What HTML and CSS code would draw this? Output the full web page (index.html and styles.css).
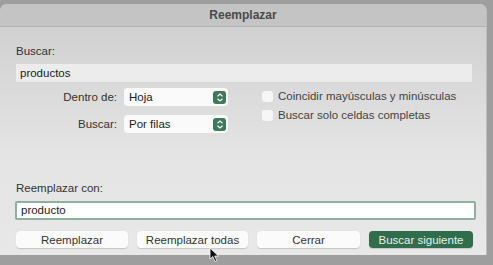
FILE: index.html
```html
<!DOCTYPE html>
<html lang="es">
<head>
  <meta charset="UTF-8">
  <title>Reemplazar</title>
  <link rel="stylesheet" href="styles.css">
</head>
<body>

  <div class="dialog">
    <div class="titlebar">Reemplazar</div>

    <div class="content">
      <div class="label">Buscar:</div>
      <div class="field">productos</div>

      <div class="options">
        <div class="selects">
          <div class="row">
            <span class="row-label">Dentro de:</span>
            <div class="select">
              <span>Hoja</span>
              <span class="stepper">
                <svg width="8" height="9" viewBox="0 0 8 9"><path d="M1.5 3.2 L4 1 L6.5 3.2 M1.5 5.8 L4 8 L6.5 5.8" fill="none" stroke="#fff" stroke-width="1.2"/></svg>
              </span>
            </div>
          </div>
          <div class="row">
            <span class="row-label">Buscar:</span>
            <div class="select">
              <span>Por filas</span>
              <span class="stepper">
                <svg width="8" height="9" viewBox="0 0 8 9"><path d="M1.5 3.2 L4 1 L6.5 3.2 M1.5 5.8 L4 8 L6.5 5.8" fill="none" stroke="#fff" stroke-width="1.2"/></svg>
              </span>
            </div>
          </div>
        </div>

        <div class="checks">
          <div class="check"><span class="box"></span>Coincidir mayúsculas y minúsculas</div>
          <div class="check"><span class="box"></span>Buscar solo celdas completas</div>
        </div>
      </div>

      <div class="label replace-label">Reemplazar con:</div>
      <div class="field input">producto</div>

      <div class="buttons">
        <button class="btn">Reemplazar</button>
        <button class="btn">Reemplazar todas</button>
        <button class="btn">Cerrar</button>
        <button class="btn primary">Buscar siguiente</button>
      </div>
    </div>
  </div>

  <!-- mouse pointer -->
  <svg class="pointer" width="12" height="16" viewBox="0 0 12 16">
    <path d="M1 1 L1 12 L3.8 9.6 L6 14.5 L7.8 13.7 L5.7 9 L9.5 9 Z" fill="#111" stroke="#fff" stroke-width="0.8"/>
  </svg>

</body>
</html>
```

FILE: styles.css
```css
body {
  margin: 0;
  width: 493px;
  height: 265px;
  overflow: hidden;
  background: #9e9e9e;
  font-family: 'Liberation Sans', Arial, sans-serif;
  font-size: 11.5px;
  color: #333;
  position: relative;
}

.dialog {
  width: 486px;
  height: 251px;
  margin-top: 4px;
  border-radius: 7px 7px 0 0;
  background: linear-gradient(#cdcdcd, #e4e4e4 60%, #e8e8e8);
  border-right: 1px solid #bdbdbd;
  overflow: hidden;
}

.titlebar {
  height: 22px;
  line-height: 22px;
  text-align: center;
  font-weight: bold;
  font-size: 12px;
  color: #4a4a4a;
  background: #c4c4c4;
  border-bottom: 1px solid #b4b4b4;
}

.content {
  padding: 17px 13px 0 16px;
}

.label {
  height: 14px;
  line-height: 14px;
  color: #333;
}

.field {
  margin-top: 6px;
  height: 18px;
  line-height: 18px;
  width: 452px;
  padding-left: 4px;
  background: #ececec;
  color: #222;
}

.options {
  display: flex;
  margin-top: 6px;
}

.selects {
  display: flex;
  flex-direction: column;
  gap: 9px;
}

.row {
  display: flex;
  align-items: center;
}

.row-label {
  width: 101px;
  text-align: right;
  padding-right: 7px;
  color: #333;
}

.select {
  width: 104px;
  height: 18px;
  box-sizing: border-box;
  display: flex;
  align-items: center;
  justify-content: space-between;
  padding: 0 2px 0 5px;
  background: #fafafa;
  border-radius: 4px;
  color: #222;
}

.stepper {
  width: 13px;
  height: 13px;
  border-radius: 3px;
  background: #3d7a59;
  display: flex;
  align-items: center;
  justify-content: center;
}

.checks {
  margin-left: 34px;
  display: flex;
  flex-direction: column;
  gap: 7px;
  padding-top: 2px;
}

.check {
  display: flex;
  align-items: center;
  height: 12px;
  color: #444;
}

.box {
  width: 11px;
  height: 11px;
  border-radius: 3px;
  background: #f6f6f6;
  margin-right: 5px;
}

.replace-label {
  margin-top: 48px;
}

.input {
  margin-top: 6px;
  width: 453px;
  height: 15px;
  line-height: 15px;
  background: #fff;
  border: 2px solid #8fb09a;
  border-radius: 2px;
  margin-left: -1px;
}

.buttons {
  display: flex;
  gap: 9px;
  margin-top: 11px;
}

.btn {
  font-family: 'Liberation Sans', Arial, sans-serif;
  font-size: 11.5px;
  height: 17px;
  padding: 0;
  border: none;
  border-radius: 4px;
  background: #fbfbfb;
  color: #333;
  box-shadow: 0 0.5px 1px rgba(0,0,0,0.15);
}

.btn:nth-child(1) { width: 112px; }
.btn:nth-child(2) { width: 111px; }
.btn:nth-child(3) { width: 103px; }

.primary {
  width: 104px;
  background: #2f6d4d;
  color: #e8f0ea;
}

.pointer {
  position: absolute;
  left: 209px;
  top: 247px;
}
```
